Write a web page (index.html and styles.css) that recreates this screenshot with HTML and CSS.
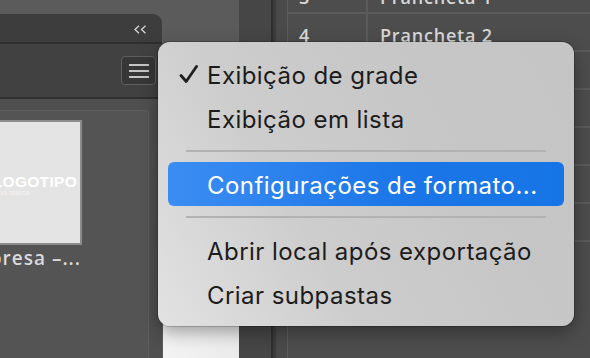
FILE: index.html
```html
<!DOCTYPE html>
<html lang="pt">
<head>
<meta charset="utf-8">
<link rel="stylesheet" href="styles.css">
</head>
<body>
<div class="screen">
  <section class="panel">
    <header class="panel-head">
      <svg class="collapse" width="14" height="9" viewBox="0 0 14 9"><path d="M6 0.8 L2 4.5 L6 8.2 M12.5 0.8 L8.5 4.5 L12.5 8.2" fill="none" stroke="#cfcfcf" stroke-width="1.4"/></svg>
    </header>
    <div class="panel-tools">
      <button class="menu-btn" aria-label="menu"><span></span><span></span><span></span></button>
    </div>
    <div class="panel-body">
      <div class="card">
        <div class="thumb">
          <div class="logo">
            <div class="logo-main">LOGOTIPO</div>
            <div class="logo-sub">sua marca</div>
          </div>
        </div>
        <div class="thumb-label">Empresa –...</div>
      </div>
    </div>
  </section>
  <div class="gap-col"><div class="white-block"></div></div>
  <div class="dark-col"></div>
  <div class="split"></div>
  <div class="side-col"></div>
  <div class="table">
    <div class="row"><div class="num">3</div><div class="name">Prancheta 1</div></div>
    <div class="row"><div class="num">4</div><div class="name">Prancheta 2</div></div>
    <div class="row"><div class="num">5</div><div class="name">Prancheta 3</div></div>
    <div class="row"><div class="num">6</div><div class="name">Prancheta 4</div></div>
    <div class="row"><div class="num">7</div><div class="name">Prancheta 5</div></div>
    <div class="row"><div class="num">8</div><div class="name">Prancheta 6</div></div>
    <div class="row"><div class="num">9</div><div class="name">Prancheta 7</div></div>
  </div>

  <div class="menu">
    <div class="item"><span class="lead"><svg width="19" height="19" viewBox="0 0 19 19"><path d="M2 10.5 L7.2 16.5 L17.5 1.5" fill="none" stroke="#202020" stroke-width="2.8" stroke-linecap="round" stroke-linejoin="round"/></svg></span><span class="label">Exibição de grade</span></div>
    <div class="item"><span class="lead"></span><span class="label">Exibição em lista</span></div>
    <div class="sep"></div>
    <div class="item active"><span class="lead"></span><span class="label">Configurações de formato...</span></div>
    <div class="sep"></div>
    <div class="item"><span class="lead"></span><span class="label">Abrir local após exportação</span></div>
    <div class="item"><span class="lead"></span><span class="label">Criar subpastas</span></div>
  </div>
</div>
</body>
</html>
```
FILE: styles.css
```css
* { box-sizing: border-box; }
html, body { margin: 0; padding: 0; }
body {
  width: 590px;
  height: 358px;
  overflow: hidden;
  background: #5b5b5b;
  font-family: "Open Sans", "DejaVu Sans", sans-serif;
}
.screen {
  position: relative;
  width: 590px;
  height: 358px;
  display: flex;
  overflow: hidden;
}

/* left panel */
.panel {
  flex: none;
  width: 222px;
  margin-left: -60px;
  margin-top: 14px;
  background: #525252;
  border-top-right-radius: 9px;
  overflow: hidden;
  display: flex;
  flex-direction: column;
}
.panel-head {
  height: 26px;
  background: #3d3d3d;
  border-bottom: 2px solid #2f2f2f;
  display: flex;
  justify-content: flex-end;
  align-items: center;
  padding-right: 15px;
  padding-top: 2px;
  box-sizing: content-box;
}
.panel-tools {
  height: 55px;
  background: #414141;
  border-bottom: 2px solid #303030;
  display: flex;
  justify-content: flex-end;
  align-items: flex-start;
  padding: 12px 6px 0 0;
}
.menu-btn {
  width: 35px;
  height: 29px;
  border: 1px solid #5f5f5f;
  border-radius: 4px;
  background: #373737;
  padding: 0;
  display: flex;
  flex-direction: column;
  align-items: center;
  justify-content: center;
  gap: 4px;
}
.menu-btn span {
  display: block;
  width: 20px;
  height: 2px;
  background: #c4c4c4;
}
.panel-body {
  flex: 1;
  background: #4f4f4f;
  padding: 11px 13px 0 10px;
}
.card {
  height: 100%;
  background: #545454;
  border-top: 1px solid #5f5f5f;
  border-right: 1px solid #5f5f5f;
  border-top-right-radius: 4px;
  padding: 9px 0 0 7px;
}
.thumb {
  width: 125px;
  height: 125px;
  background: #e4e4e4;
  border: 2px solid #8c8c8c;
  display: flex;
  justify-content: flex-end;
  align-items: flex-start;
  padding: 53px 3px 0 0;
}
.logo { color: #ffffff; }
.logo-main {
  font-family: "Liberation Sans", Arial, sans-serif;
  font-weight: 700;
  font-size: 15.5px;
  line-height: 14px;
  letter-spacing: 0.3px;
}
.logo-sub {
  font-family: "Liberation Sans", Arial, sans-serif;
  font-size: 7.5px;
  line-height: 8px;
  padding-left: 2px;
  color: #f4f4f4;
}
.thumb-label {
  width: 124px;
  margin-top: 1px;
  text-align: right;
  color: #d9d9d9;
  font-size: 19px;
  font-weight: 600;
  letter-spacing: 1px;
  line-height: 24px;
  white-space: nowrap;
}

/* middle columns */
.gap-col {
  flex: none;
  width: 77px;
  display: flex;
  flex-direction: column;
  justify-content: flex-end;
}
.white-block {
  height: 60px;
  margin-left: 1px;
  background: linear-gradient(90deg, #f3f3f3, #ebebeb);
}
.dark-col { flex: none; width: 32px; background: #464646; }
.split {
  flex: none;
  width: 5px;
  background: linear-gradient(90deg, #2f2f2f 0 2px, #3c3c3c 2px);
}
.side-col {
  flex: none;
  width: 12px;
  background: #4a4a4a;
  border-right: 1px solid #5b5b5b;
}

/* table */
.table {
  flex: 1;
  background: #4d4d4d;
  display: flex;
  flex-direction: column;
}
.row {
  flex: none;
  height: 38px;
  display: flex;
  border-bottom: 2px solid #5b5b5b;
}
.row:first-child { margin-top: -24px; }
.num {
  width: 80px;
  border-right: 2px solid #5b5b5b;
  padding-left: 11px;
  padding-top: 3px;
  color: #dadada;
  font-size: 18px;
  font-weight: 600;
  line-height: 36px;
}
.name {
  padding-left: 12px;
  padding-top: 3px;
  color: #d8d8d8;
  font-size: 18px;
  font-weight: 600;
  letter-spacing: 0.8px;
  line-height: 36px;
}

/* context menu */
.menu {
  position: absolute;
  left: 158px;
  top: 42px;
  width: 416px;
  height: 284px;
  border-radius: 12px;
  background: linear-gradient(60deg, #e2e2e2 0%, #cdcdcd 35%, #c6c6c6 70%, #c5c5c5 100%);
  box-shadow: 0 0 0 1px rgba(0,0,0,0.18), 0 6px 18px rgba(0,0,0,0.35);
  padding: 10px 10px;
  font-family: "Inter", "Noto Sans", sans-serif;
  font-size: 24px;
  color: #1c1c1c;
  letter-spacing: 0.45px;
}
.item {
  height: 44px;
  display: flex;
  align-items: center;
  padding-top: 2px;
  border-radius: 6px;
  white-space: nowrap;
}
.lead {
  flex: none;
  width: 39px;
  display: flex;
  align-items: center;
  padding-left: 11px;
}
.lead svg { display: block; margin-top: -1px; }
.item.active {
  background: linear-gradient(90deg, #3b8df3, #1b76e7 60%, #1675e6);
  color: #ffffff;
}
.sep {
  height: 2px;
  margin: 10px 18px;
  background: #b2b2b2;
}
```
